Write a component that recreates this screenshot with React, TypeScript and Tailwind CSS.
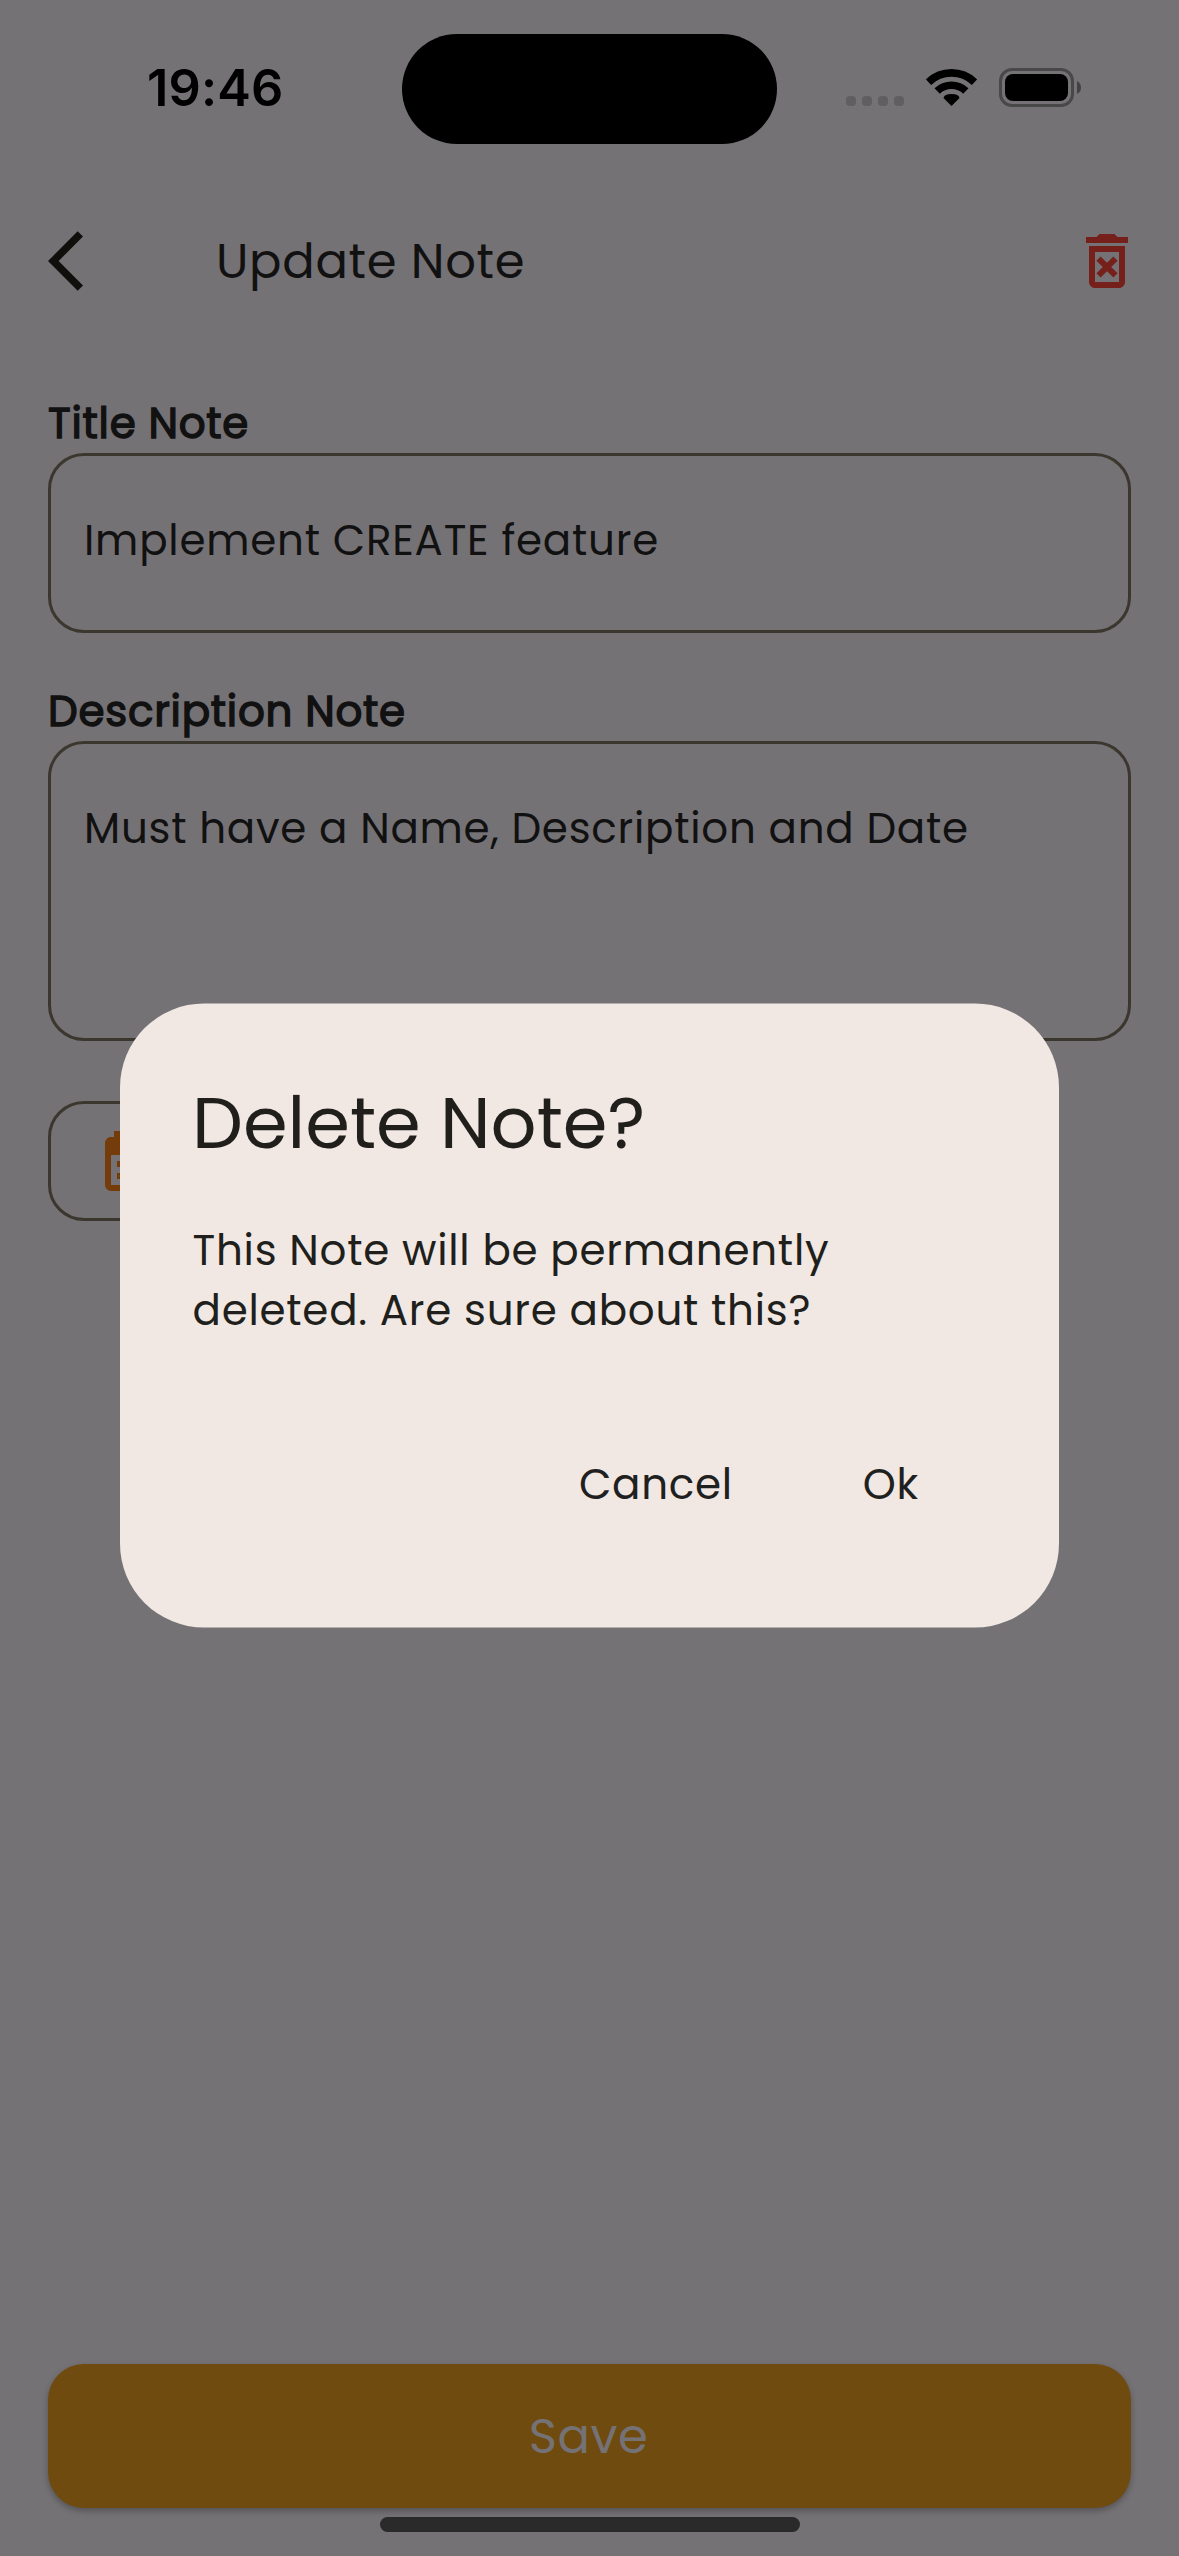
import type { ReactNode } from "react";
import { MdArrowBackIos, MdCalendarMonth, MdOutlineDeleteForever } from "react-icons/md";

function StatusBar() {
  return (
    <div className="flex h-[177px] shrink-0 items-start text-black">
      <span className="ml-[147px] mt-[57px] w-[255px] font-['Inter',sans-serif] text-[50.5px] font-semibold leading-[61px] tracking-[0.15px]">
        19:46
      </span>
      <div className="mt-[34px] h-[110px] w-[375px] rounded-full bg-black" />
      <div className="ml-[69px] mt-[96px] flex gap-[6px]">
        <i className="size-[10px] rounded-[4px] bg-[#605e61]" />
        <i className="size-[10px] rounded-[4px] bg-[#605e61]" />
        <i className="size-[10px] rounded-[4px] bg-[#605e61]" />
        <i className="size-[10px] rounded-[4px] bg-[#605e61]" />
      </div>
      <svg className="ml-[22px] mt-[69px] h-[37px] w-[51px]" viewBox="0 0 152 111" fill="none">
        <path d="M7 39.5A99.5 99.5 0 0 1 145 39.5" stroke="currentColor" strokeWidth="23" />
        <path d="M33 66A62.5 62.5 0 0 1 119 66" stroke="currentColor" strokeWidth="23" />
        <path d="M76 111L52 87Q54 75 76 75Q98 75 100 87Z" fill="currentColor" />
      </svg>
      <div className="ml-[22px] mt-[68px] flex h-[39px] w-[75px] rounded-[13px] border-[3px] border-[#494849] p-[3px]">
        <div className="h-full w-full rounded-[8px] bg-black" />
      </div>
      <svg className="ml-[3px] mt-[81px] h-[13px] w-[4px]" viewBox="0 0 4 13">
        <path d="M0 0Q4 2 4 6.5Q4 11 0 13Z" fill="#434243" />
      </svg>
    </div>
  );
}

function Label({ children }: { children: ReactNode }) {
  return (
    <div className="text-[42px] leading-[59px] tracking-[0.75px] [-webkit-text-stroke:1.4px_#111111]">{children}</div>
  );
}

export default function App() {
  return (
    <div className="relative flex h-[2556px] w-[1179px] flex-col overflow-hidden bg-[#757276] font-['Poppins','Inter',sans-serif] text-[#111111]">
      <StatusBar />

      <header className="flex h-[168px] shrink-0 items-center pl-[48px] pr-[36px]">
        <MdArrowBackIos className="size-[72px] text-[#100f0b]" />
        <h1 className="ml-[96px] flex-1 text-[48px] leading-[67px] tracking-[0.7px]">Update Note</h1>
        <MdOutlineDeleteForever className="size-[72px] text-[#76201b]" />
      </header>

      <main className="flex flex-1 flex-col px-[48px] pt-[49px]">
        <Label>Title Note</Label>
        <div className="h-[180px] rounded-[36px] border-[3px] border-[#3b362e] px-[33px] pt-[55px] text-[42px] leading-[59px] tracking-[0.77px]">
          Implement CREATE feature
        </div>

        <div className="mt-[49px]">
          <Label>Description Note</Label>
        </div>
        <div className="h-[300px] rounded-[36px] border-[3px] border-[#3b362e] px-[33px] pt-[55px] text-[42px] leading-[59px] tracking-[0.75px]">
          Must have a Name, Description and Date
        </div>

        <div className="mt-[60px] flex h-[120px] w-[480px] items-center rounded-[36px] border-[3px] border-[#3b362e] pl-[45px]">
          <MdCalendarMonth className="size-[72px] text-[#733c0a]" />
        </div>

        <button className="mt-[1143px] h-[144px] w-full shrink-0 rounded-[36px] bg-[#6f4b0f] pr-[2px] text-center text-[48px] leading-[67px] tracking-[0.6px] text-[#757276] shadow-[0_3px_6px_rgba(0,0,0,0.28)]">
          Save
        </button>
        <div className="ml-[332px] mt-[9px] h-[15px] w-[420px] shrink-0 rounded-full bg-[#2a2a2a]" />
      </main>

      <div
        role="dialog"
        className="absolute left-[120px] top-[1003px] flex h-[624px] w-[939px] flex-col px-[72px] pt-[69px] text-[#201f1c] before:absolute before:inset-0 before:translate-y-[0.5px] before:rounded-[84px] before:bg-[#f1e8e3]"
      >
        <h2 className="relative text-[72px] leading-[101px]">Delete Note?</h2>
        <p className="relative mt-[48px] pl-[0.5px] text-[42px] leading-[60px] tracking-[0.75px]">
          This Note will be permanently
          <br />
          deleted. Are sure about this?
        </p>
        <div className="relative mt-[114px] flex gap-[130px] pl-[387px] text-[42px] leading-[59px] tracking-[0.7px] text-[#1f2120]">
          <button>Cancel</button>
          <button>Ok</button>
        </div>
      </div>
    </div>
  );
}
